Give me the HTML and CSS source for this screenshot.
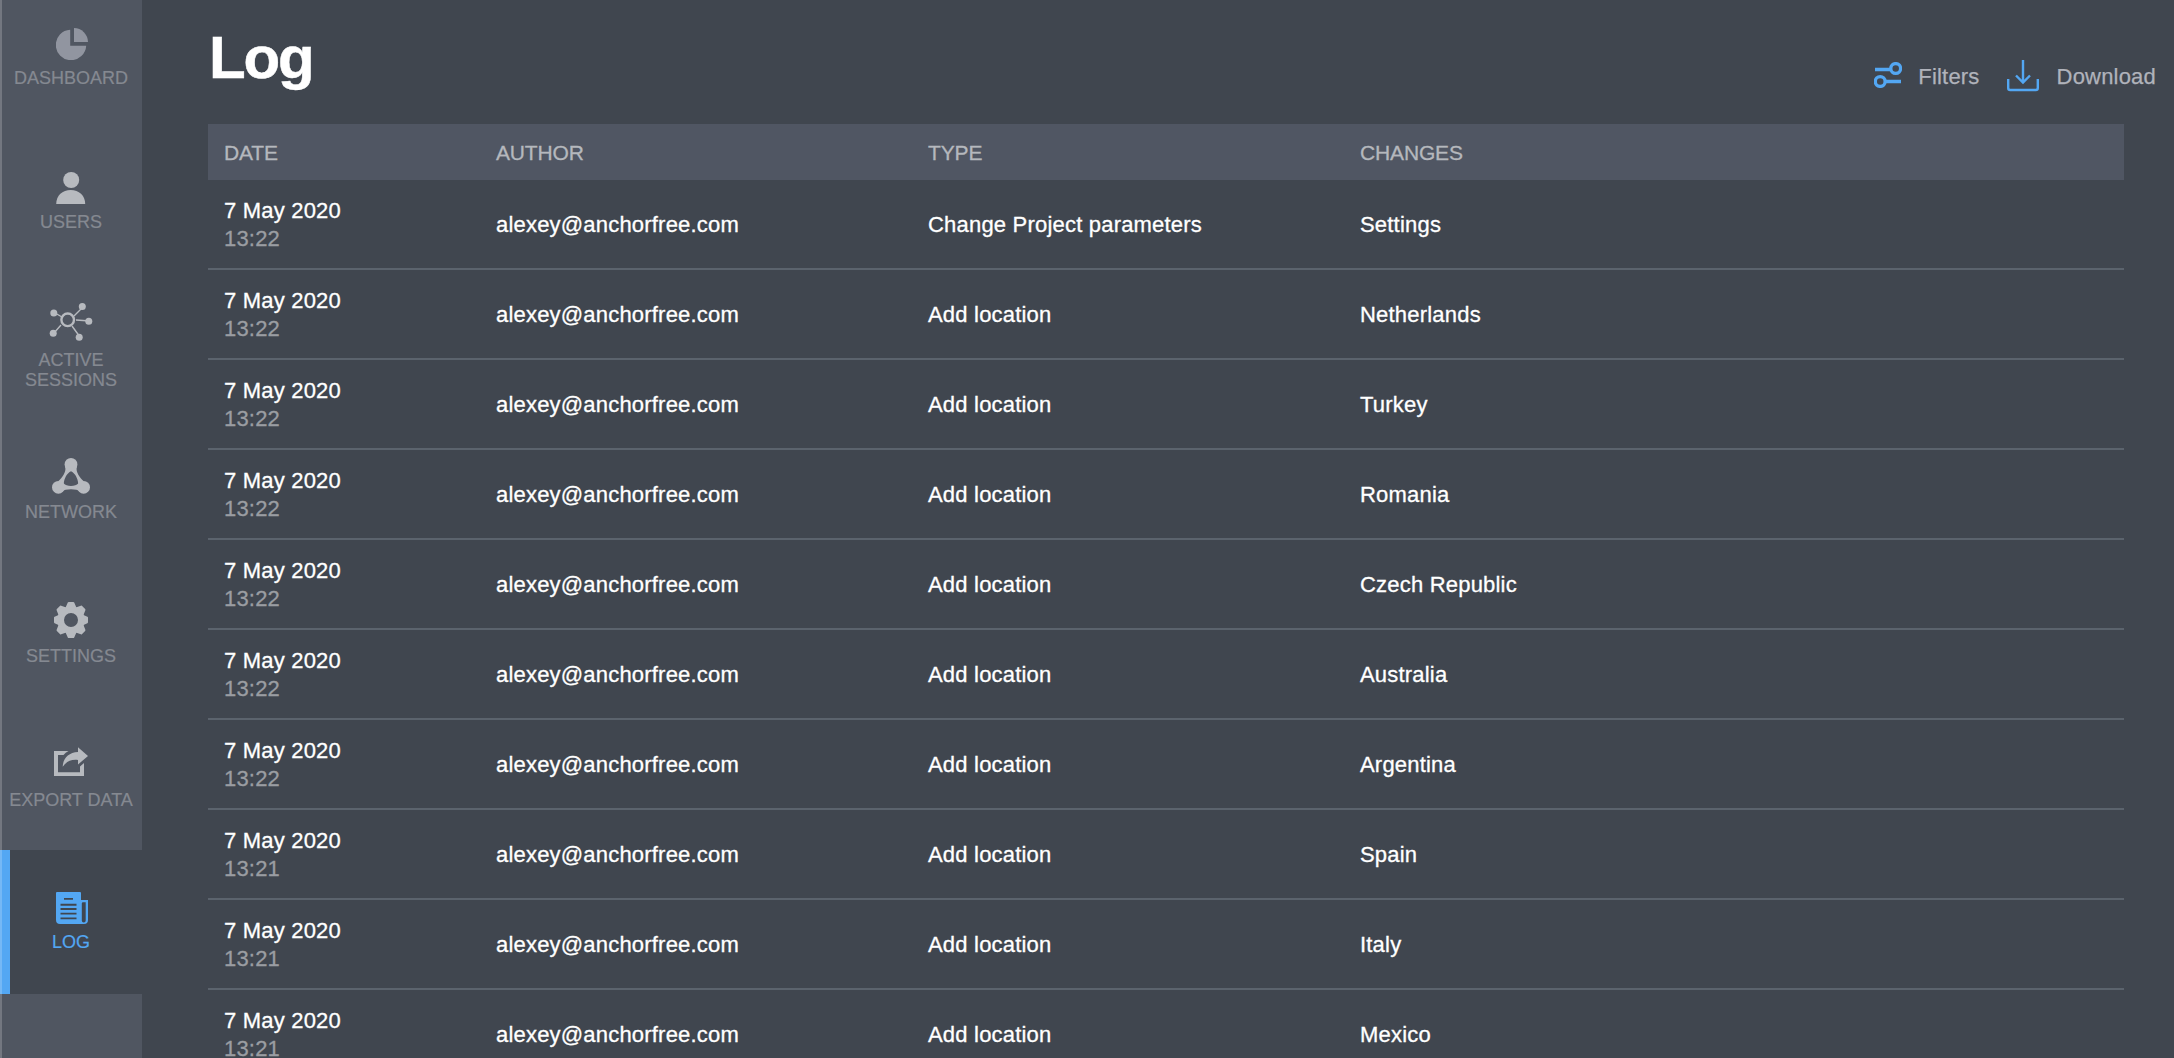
FILE: index.html
```html
<!DOCTYPE html>
<html lang="en">
<head>
<meta charset="utf-8">
<title>Log</title>
<link rel="stylesheet" href="styles.css">
</head>
<body>
<div class="app">
  <nav class="sidebar">
    <a class="nav-item nav-item-dim">
      <svg class="icon icon-pie" width="32" height="32" viewBox="0 0 32 32"><path d="M14.200 1.800v16H30.200A15.200 15.200 0 1 1 14.200 1.800z"/><path d="M18 0a14.200 14.200 0 0 1 14 14H18z"/></svg>
      <span>DASHBOARD</span>
    </a>
    <a class="nav-item">
      <svg class="icon" width="30" height="32" viewBox="0 0 30 32"><circle cx="15.200" cy="8" r="8"/><path d="M.2 32c0-8.500 6.300-14 14.500-14S29.200 23.500 29.200 32z"/></svg>
      <span>USERS</span>
    </a>
    <a class="nav-item">
      <svg class="icon icon-sessions" width="44" height="40" viewBox="0 0 44 40"><g class="thin"><path d="M6 11l7 4M25 14l9-9M27 18l14 1M23 24l8 11M12 23l-7 8"/><circle class="ring" cx="18.700" cy="17.800" r="6.300"/></g><circle cx="4.800" cy="11" r="3.500"/><circle cx="33.300" cy="4.500" r="3.500"/><circle cx="39.800" cy="19.300" r="3.500"/><circle cx="30.200" cy="35.200" r="3.500"/><circle cx="4.200" cy="31.200" r="3.500"/></svg>
      <span>ACTIVE<br>SESSIONS</span>
    </a>
    <a class="nav-item nav-item-low">
      <svg class="icon" width="38" height="36" viewBox="0 0 38 36"><circle cx="19" cy="6.400" r="6.400"/><circle cx="6.400" cy="29.300" r="6.400"/><circle cx="31.600" cy="29.300" r="6.400"/><path fill-rule="evenodd" d="M13.200 9C14.500 14 10 20 6.500 23L10 33.500C13 30.500 25 30.500 28 33.500L31.500 23C28 20 23.500 14 24.800 9zM19 13.200C15.200 14.800 12 20.500 11.800 25.500C14 28.800 24 28.800 26.200 25.500C26 20.500 22.800 14.800 19 13.200z"/></svg>
      <span>NETWORK</span>
    </a>
    <a class="nav-item nav-item-low">
      <svg class="icon icon-gear" width="34" height="36" viewBox="0 0 34 36"><circle class="hub" cx="17" cy="18" r="10.300"/><g transform="translate(17 18)"><path id="tooth" d="M-4.500-12L-2.300-17H2.300L4.500-12z"/><use href="#tooth" transform="rotate(45) translate(0 .3)"/><use href="#tooth" transform="rotate(90) translate(0 1)"/><use href="#tooth" transform="rotate(135) translate(0 .3)"/><use href="#tooth" transform="rotate(180)"/><use href="#tooth" transform="rotate(225) translate(0 .3)"/><use href="#tooth" transform="rotate(270) translate(0 1)"/><use href="#tooth" transform="rotate(315) translate(0 .3)"/></g></svg>
      <span>SETTINGS</span>
    </a>
    <a class="nav-item nav-item-low">
      <svg class="icon icon-export" width="34" height="30" viewBox="0 0 34 30"><path d="M0 4h14.500Q11.500 5.500 9.500 8H4v17.200h22V19.500L30 16v13H0z"/><path d="M24 .3L34 9 24 17.500V13c-7-.8-11.500 1.500-15.300 6.800C9 11.500 14.500 5.500 24 5z"/></svg>
      <span>EXPORT DATA</span>
    </a>
    <a class="nav-item nav-item-active">
      <svg class="icon icon-log" width="32" height="32" viewBox="0 0 32 32"><path fill-rule="evenodd" d="M0 1Q0 0 1 0H24Q25 0 25 1V8H32V28Q32 32 28 32H4Q0 32 0 28zM27 10.300h2.700V28.500a1.900 1.900 0 0 1-3.900 0V11.500Q25.800 10.300 27 10.300zM8 6V7.800h9V6zM4.500 11.800v1.900h16v-1.900zM4.500 16.100V18h16v-1.900zM4.500 20.800v1.600h16v-1.600zM4.500 25.600v1.700h16v-1.700z"/></svg>
      <span>LOG</span>
    </a>
  </nav>
  <main class="main">
    <header class="page-header">
      <h1 class="title">Log</h1>
      <div class="actions">
        <a class="action"><svg class="filters-icon" width="28" height="26" viewBox="0 0 28 26"><path d="M1 7.500h15M12 19.500h15"/><circle cx="21.700" cy="6.500" r="4.900"/><circle cx="6.200" cy="19.500" r="4.900"/></svg><span>Filters</span></a>
        <a class="action"><svg class="download-icon" width="32" height="32" viewBox="0 0 32 32"><path d="M16 0v22M9 15.500l7 7 7-7M1.200 19v9q0 2 2 2H28.800q2 0 2-2v-9"/></svg><span>Download</span></a>
      </div>
    </header>
    <section class="table">
      <div class="row row-head"><span>DATE</span><span>AUTHOR</span><span>TYPE</span><span>CHANGES</span></div>
      <div class="row"><div>7 May 2020<br><small class="time">13:22</small></div><span>alexey@anchorfree.com</span><span>Change Project parameters</span><span>Settings</span></div>
      <div class="row"><div>7 May 2020<br><small class="time">13:22</small></div><span>alexey@anchorfree.com</span><span>Add location</span><span>Netherlands</span></div>
      <div class="row"><div>7 May 2020<br><small class="time">13:22</small></div><span>alexey@anchorfree.com</span><span>Add location</span><span>Turkey</span></div>
      <div class="row"><div>7 May 2020<br><small class="time">13:22</small></div><span>alexey@anchorfree.com</span><span>Add location</span><span>Romania</span></div>
      <div class="row"><div>7 May 2020<br><small class="time">13:22</small></div><span>alexey@anchorfree.com</span><span>Add location</span><span>Czech Republic</span></div>
      <div class="row"><div>7 May 2020<br><small class="time">13:22</small></div><span>alexey@anchorfree.com</span><span>Add location</span><span>Australia</span></div>
      <div class="row"><div>7 May 2020<br><small class="time">13:22</small></div><span>alexey@anchorfree.com</span><span>Add location</span><span>Argentina</span></div>
      <div class="row"><div>7 May 2020<br><small class="time">13:21</small></div><span>alexey@anchorfree.com</span><span>Add location</span><span>Spain</span></div>
      <div class="row"><div>7 May 2020<br><small class="time">13:21</small></div><span>alexey@anchorfree.com</span><span>Add location</span><span>Italy</span></div>
      <div class="row"><div>7 May 2020<br><small class="time">13:21</small></div><span>alexey@anchorfree.com</span><span>Add location</span><span>Mexico</span></div>
    </section>
  </main>
</div>
</body>
</html>
```
FILE: styles.css
```css
* { box-sizing: border-box; }
body {
  margin: 0;
  background: #40464f;
  color: #fff;
  font: 22px/28px "Liberation Sans", Arial, sans-serif;
}
.app { display: flex; height: 100vh; overflow: hidden; position: relative; }
/* light edge over the window's left side */
.app::before {
  content: "";
  position: absolute;
  inset: 0 auto 0 0;
  width: 2px;
  background: rgba(255, 255, 255, .2);
  z-index: 1;
}

.sidebar {
  flex: none;
  width: 142px;
  background: #505661;
  display: flex;
  flex-direction: column;
}
.nav-item {
  flex: none;
  height: 144px;
  display: flex;
  flex-direction: column;
  align-items: center;
  justify-content: flex-end;
  gap: 8px;
  padding-bottom: 42px;
  color: #858991;
  font-size: 18px;
  line-height: 20px;
  text-align: center;
  white-space: nowrap;
  -webkit-text-stroke: .2px;
}
.nav-item:first-child { margin-top: -14px; }
.nav-item:nth-child(3) { padding-bottom: 28px; }
.nav-item-low { padding-bottom: 40px; }
.nav-item-active {
  background: #40464f;
  color: #53a7f3;
  border-left: 10px solid #53a7f3;
  padding-right: 10px;
}
.icon { fill: #b7babf; display: block; }
.nav-item-dim .icon { fill: #9195a0; }
.nav-item-active .icon { fill: #53a7f3; }
.icon-pie, .icon-log { margin-left: 2px; }
.icon-export { margin-bottom: 5px; }
.icon-sessions { margin-right: 1px; }
.icon-sessions .thin { fill: none; stroke: #b7babf; stroke-width: 1.4; }
.icon-sessions .ring { stroke-width: 2.4; }
.icon-gear path { stroke: #b7babf; stroke-width: 2; stroke-linejoin: round; }
.icon-gear .hub { fill: none; stroke: #b7babf; stroke-width: 6.6; }

.main { flex: 1; min-width: 0; padding-left: 66px; }
.page-header {
  height: 124px;
  display: flex;
  justify-content: space-between;
  align-items: flex-start;
  padding-right: 18px;
}
.title { margin: 23px 0 0 1px; font-size: 60px; line-height: 70px; letter-spacing: -2.1px; -webkit-text-stroke: .5px; }
.actions { display: flex; gap: 27px; margin-top: 58px; color: #b0b3bb; letter-spacing: .2px; -webkit-text-stroke: .25px; }
.action { display: flex; align-items: center; height: 36px; }
.action span { padding-top: 1px; }
.filters-icon, .download-icon { fill: none; stroke: #53a7f3; }
.filters-icon { stroke-width: 3.3; margin: 0 16px 2px 0; }
.download-icon { stroke-width: 2.4; margin-right: 18px; }

.table { width: 1916px; }
.row {
  display: grid;
  grid-template-columns: 272px 432px 432px 1fr;
  align-items: center;
  height: 90px;
  padding: 2px 16px 0;
  border-bottom: 2px solid #5b636d;
  letter-spacing: .2px;
  -webkit-text-stroke: .3px;
}
.row-head {
  height: 56px;
  border: 0;
  background: #505663;
  color: #b5b8bd;
  font-size: 21px;
  letter-spacing: -.15px;
}
.time { font-size: 22px; color: #9a9da2; }
```
